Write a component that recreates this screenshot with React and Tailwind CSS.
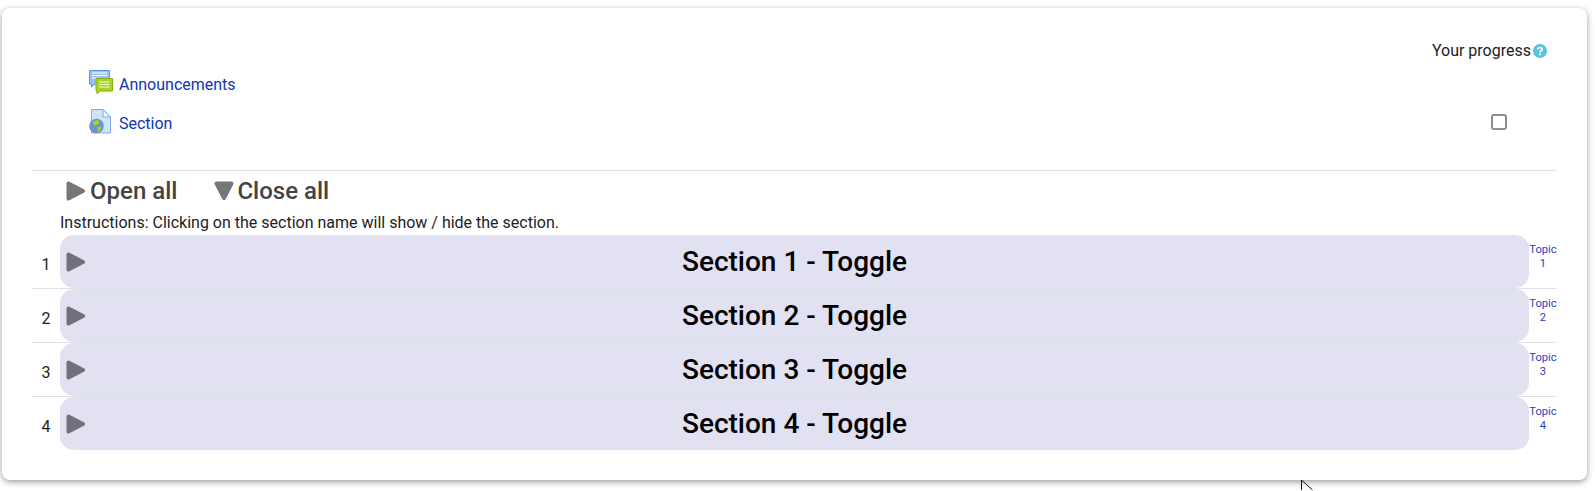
const sections = [1, 2, 3, 4];

function ArrowRight({ className }) {
  return (
    <svg viewBox="0 0 20 20" className={className}>
      <path d="M2.5 2.5 L17 10 L2.5 17.5 Z" fill="currentColor" stroke="currentColor" strokeWidth="4" strokeLinejoin="round" />
    </svg>
  );
}

function ForumIcon() {
  return (
    <svg viewBox="0 0 24 24" className="mb-[6px] ml-[1px] h-6 w-6 shrink-0">
      <path d="M0.5 0.5 H20.5 V14 H6 L2.5 17 V14 H0.5 Z" fill="#9cc0f5" stroke="#5f8fe6" strokeWidth="1" />
      <path d="M3 3 H18 M3 5.5 H18 M3 8 H8" stroke="#fff" strokeWidth="1" />
      <path d="M7 8.5 H23.5 V21 H11 L8 24 V21 H7 Z" fill="#a8d41c" stroke="#86ad12" strokeWidth="1" />
      <path d="M10 12 H20.5 M10 14.5 H20.5 M10 17 H20.5" stroke="#f4fbd8" strokeWidth="1.2" />
    </svg>
  );
}

function PageIcon() {
  return (
    <svg viewBox="0 0 24 25" className="mb-[6px] h-[25px] w-6 shrink-0">
      <path d="M3.5 0.5 H15 L22.5 8 V24 H3.5 Z" fill="#cfe4fb" stroke="#7fabeb" strokeWidth="1" />
      <path d="M15 0.5 V8 H22.5 Z" fill="#eef6fe" stroke="#7fabeb" strokeWidth="1" />
      <circle cx="8.5" cy="17" r="7.3" fill="#6a93dc" />
      <path d="M4.5 13.5 L8.5 11 L11.5 12.5 L10 15.5 L6.5 16.5 Z M9.5 18 L13.5 17 L13 20.5 L10 23 Z" fill="#a8d41c" />
    </svg>
  );
}

function HelpIcon() {
  return (
    <svg viewBox="0 0 14 14" className="ml-[2px] h-[14px] w-[14px] shrink-0">
      <circle cx="7" cy="7" r="7" fill="#5bc0de" />
      <path d="M4.8 5.4 C4.9 2.9 9.2 2.9 9.2 5.3 C9.2 6.9 7 6.8 7 8.4" fill="none" stroke="#fff" strokeWidth="1.7" />
      <rect x="6.1" y="9.5" width="1.8" height="1.8" fill="#fff" />
    </svg>
  );
}

function SectionRow({ n, last }) {
  return (
    <div className={last ? "flex h-[53px]" : "flex h-[54px] border-b border-[#dee2e6]"}>
      <div className="flex w-[28px] items-center justify-center pt-[6px] text-[16px] text-[#1d2125]">{n}</div>
      <div className="relative flex flex-1 items-center justify-center rounded-[14px] bg-[#e2e1f2]">
        <ArrowRight className="absolute left-[6px] top-[17px] h-5 w-5 text-[#71717c]" />
        <span className="text-[28px] font-medium text-black">Section {n} - Toggle</span>
      </div>
      <div className="w-[28px] pt-[8px] text-center text-[11.2px] leading-[14px] text-[#1f3fc8]">
        Topic<br />{n}
      </div>
    </div>
  );
}

export default function App() {
  return (
    <div className="h-[491px] overflow-hidden bg-white pl-[2px] pr-[8px] pt-[8px] font-['Roboto',sans-serif]">
      <div className="h-[472px] rounded-[8px] bg-white pl-[30px] pr-[30px] pt-[33px] shadow-[0_2px_6px_rgba(0,0,0,0.4)]">
        <div className="flex h-[20px] items-center justify-end pr-[10px] text-[16px] text-[#1d2125]">
          Your progress
          <HelpIcon />
        </div>
        <div className="mt-[11px] flex h-[26px] items-center pl-[56px]">
          <ForumIcon />
          <a className="ml-[6px] text-[16px] text-[#0f35bb]">Announcements</a>
        </div>
        <div className="mt-[13px] flex h-[26px] items-center justify-between pl-[56px] pr-[50px]">
          <div className="flex items-center">
            <PageIcon />
            <a className="ml-[7px] text-[16px] text-[#0f35bb]">Section</a>
          </div>
          <div className="mb-[4px] h-4 w-4 rounded-[3px] border-2 border-[#8f8f8f] bg-white" />
        </div>
        <div className="mt-[33px] border-t border-[#dee2e6] pl-[28px]">
          <div className="flex h-[39px] items-center pl-[6px] text-[24px] font-medium text-[#444]">
            <ArrowRight className="h-5 w-5 text-[#777]" />
            <span className="ml-[4px]">Open all</span>
            <ArrowRight className="ml-[37px] h-5 w-5 rotate-90 text-[#777]" />
            <span className="ml-[3px]">Close all</span>
          </div>
          <div className="flex h-[25px] items-center text-[16px] text-[#1d2125]">
            Instructions: Clicking on the section name will show / hide the section.
          </div>
        </div>
        {sections.map((n) => (
          <SectionRow key={n} n={n} last={n === sections.length} />
        ))}
      </div>
      <svg viewBox="0 0 14 12" className="absolute left-[1300px] top-[480px] h-[11px] w-[14px]">
        <path d="M1 0 V11 M1 0 L13 11" fill="none" stroke="#000" strokeWidth="1" />
      </svg>
    </div>
  );
}
